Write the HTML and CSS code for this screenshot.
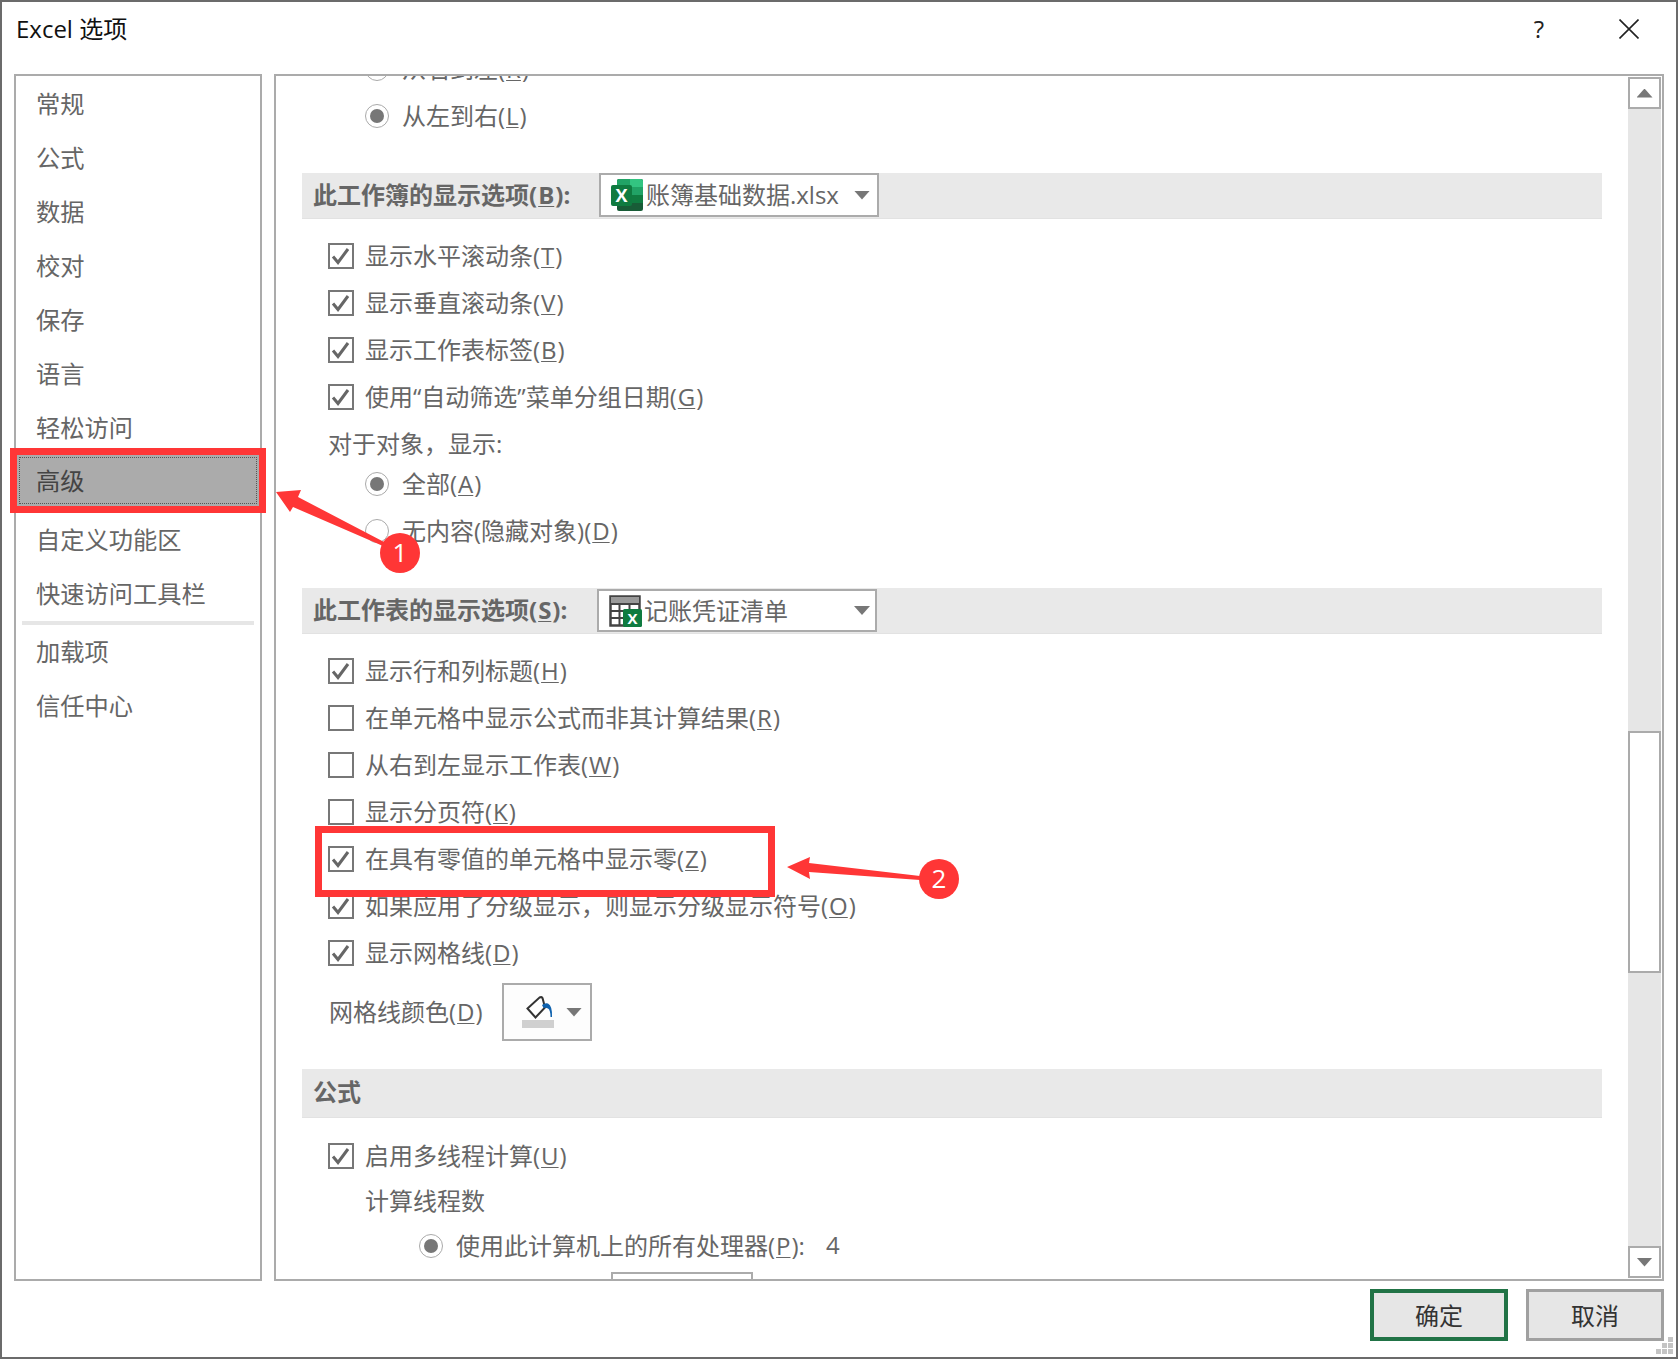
FILE: index.html
```html
<!DOCTYPE html>
<html lang="zh-CN">
<head>
<meta charset="utf-8">
<title>Excel 选项</title>
<link rel="stylesheet" href="styles.css">
</head>
<body>
<div class="dialog">
  <header class="titlebar">
    <span class="title">Excel 选项</span>
    <span class="help">?</span>
    <svg class="close" width="20" height="20" viewBox="0 0 20 20"><path d="M0.5 0.5L19.5 19.5M19.5 0.5L0.5 19.5" fill="none" stroke="#222" stroke-width="1.6"/></svg>
  </header>
  <div class="panels">
    <nav class="nav">
      <div class="nav-item">常规</div>
      <div class="nav-item">公式</div>
      <div class="nav-item">数据</div>
      <div class="nav-item">校对</div>
      <div class="nav-item">保存</div>
      <div class="nav-item">语言</div>
      <div class="nav-item">轻松访问</div>
      <div class="nav-item nav-item--active">高级</div>
      <div class="nav-item">自定义功能区</div>
      <div class="nav-item">快速访问工具栏</div>
      <div class="nav-sep"></div>
      <div class="nav-item">加载项</div>
      <div class="nav-item">信任中心</div>
    </nav>
    <main class="main">
      <div class="content">
        <div class="row row--radio"><span class="radio"></span><span>从右到左(<u>R</u>)</span></div>
        <div class="row row--radio"><span class="radio radio--on"></span><span>从左到右(<u>L</u>)</span></div>

        <section class="section section--first">
          <b class="section-label section-label--book">此工作簿的显示选项(<u>B</u>):</b>
          <div class="combo combo--book">
            <svg class="combo-icon" width="32" height="32" viewBox="0 0 32 32">
              <rect x="6" width="26" height="32" rx="2" fill="#185c37"/>
              <path d="M19 0H30a2 2 0 0 1 2 2V8H19z" fill="#33c481"/>
              <path d="M8 0H19V8H6V2a2 2 0 0 1 2-2z" fill="#21a366"/>
              <rect x="6" y="8" width="13" height="8" fill="#107c41"/>
              <rect x="19" y="8" width="13" height="8" fill="#21a366"/>
              <rect x="19" y="16" width="13" height="8" fill="#107c41"/>
              <rect y="6" width="21" height="21" rx="2" fill="#0f7b40"/>
              <text class="x-mark x-mark--large" x="10.5" y="23" text-anchor="middle">X</text>
            </svg>
            <span class="combo-text">账簿基础数据.xlsx</span>
            <i class="tri tri--down combo-tri"></i>
          </div>
        </section>
        <div class="row row--check"><span class="check"><svg width="22" height="22" viewBox="0 0 22 22"><path class="tick" d="M3 11.5L8 17.5L18 4"/></svg></span><span>显示水平滚动条(<u>T</u>)</span></div>
        <div class="row row--check"><span class="check"><svg width="22" height="22" viewBox="0 0 22 22"><path class="tick" d="M3 11.5L8 17.5L18 4"/></svg></span><span>显示垂直滚动条(<u>V</u>)</span></div>
        <div class="row row--check"><span class="check"><svg width="22" height="22" viewBox="0 0 22 22"><path class="tick" d="M3 11.5L8 17.5L18 4"/></svg></span><span>显示工作表标签(<u>B</u>)</span></div>
        <div class="row row--check"><span class="check"><svg width="22" height="22" viewBox="0 0 22 22"><path class="tick" d="M3 11.5L8 17.5L18 4"/></svg></span><span>使用“自动筛选”菜单分组日期(<u>G</u>)</span></div>
        <div class="text-row text-row--objects">对于对象，显示:</div>
        <div class="row row--radio"><span class="radio radio--on"></span><span>全部(<u>A</u>)</span></div>
        <div class="row row--radio"><span class="radio"></span><span>无内容(隐藏对象)(<u>D</u>)</span></div>

        <section class="section">
          <b class="section-label section-label--sheet">此工作表的显示选项(<u>S</u>):</b>
          <div class="combo combo--sheet">
            <svg class="combo-icon" width="34" height="32" viewBox="0 0 34 32">
              <rect x="1.5" y="1.5" width="29" height="29" fill="#fff" stroke="#444" stroke-width="2.5"/>
              <rect x="2" y="2" width="28" height="7" fill="#9a9a9a"/>
              <path d="M1 9H31M1 16H31M1 23H16M10.5 9V31M20.5 9V16" fill="none" stroke="#444" stroke-width="2"/>
              <rect x="14" y="14" width="19" height="18" rx="1.5" fill="#0f7b40"/>
              <text class="x-mark" x="23.5" y="28.5" text-anchor="middle">X</text>
            </svg>
            <span class="combo-text">记账凭证清单</span>
            <i class="tri tri--down combo-tri"></i>
          </div>
        </section>
        <div class="row row--check"><span class="check"><svg width="22" height="22" viewBox="0 0 22 22"><path class="tick" d="M3 11.5L8 17.5L18 4"/></svg></span><span>显示行和列标题(<u>H</u>)</span></div>
        <div class="row row--check"><span class="check"></span><span>在单元格中显示公式而非其计算结果(<u>R</u>)</span></div>
        <div class="row row--check"><span class="check"></span><span>从右到左显示工作表(<u>W</u>)</span></div>
        <div class="row row--check"><span class="check"></span><span>显示分页符(<u>K</u>)</span></div>
        <div class="row row--check"><span class="check"><svg width="22" height="22" viewBox="0 0 22 22"><path class="tick" d="M3 11.5L8 17.5L18 4"/></svg></span><span>在具有零值的单元格中显示零(<u>Z</u>)</span></div>
        <div class="row row--check"><span class="check"><svg width="22" height="22" viewBox="0 0 22 22"><path class="tick" d="M3 11.5L8 17.5L18 4"/></svg></span><span>如果应用了分级显示，则显示分级显示符号(<u>O</u>)</span></div>
        <div class="row row--check"><span class="check"><svg width="22" height="22" viewBox="0 0 22 22"><path class="tick" d="M3 11.5L8 17.5L18 4"/></svg></span><span>显示网格线(<u>D</u>)</span></div>
        <div class="grid-color">
          <span class="grid-color-label">网格线颜色(<u>D</u>)</span>
          <div class="color-btn">
            <span class="color-swatch">
              <svg class="bucket" width="28" height="24" viewBox="0 0 28 24">
                <path d="M1.5 12.5L13.5 1.5Q15.5 0.5 16.5 2L19 11.5L9.5 21.5Z" fill="#fff" stroke="#333" stroke-width="2"/>
                <path d="M16 9Q19 6.5 22 7.5Q26.5 10 26 21H24.5Q24.5 14 22 12.5Q20 11.5 17.5 12Z" fill="#0f62ae"/>
              </svg>
              <i class="swatch-bar"></i>
            </span>
            <i class="tri tri--down"></i>
          </div>
        </div>

        <section class="section section--tall">
          <b class="section-label">公式</b>
        </section>
        <div class="row row--check"><span class="check"><svg width="22" height="22" viewBox="0 0 22 22"><path class="tick" d="M3 11.5L8 17.5L18 4"/></svg></span><span>启用多线程计算(<u>U</u>)</span></div>
        <div class="text-row text-row--threads">计算线程数</div>
        <div class="row row--radio row--deep"><span class="radio radio--on"></span><span>使用此计算机上的所有处理器(<u>P</u>):</span><span class="cpu-count">4</span></div>
        <div class="spin"></div>
      </div>
      <aside class="scrollbar">
        <div class="sb-btn"><i class="tri tri--up"></i></div>
        <div class="sb-track"><div class="sb-thumb"></div></div>
        <div class="sb-btn"><i class="tri tri--down"></i></div>
      </aside>
    </main>
  </div>
  <footer class="footer">
    <button class="btn btn--primary">确定</button>
    <button class="btn">取消</button>
  </footer>
</div>
<svg class="grip" width="17" height="17" viewBox="0 0 17 17">
  <path d="M12 0h5v5h-5zM6 6h5v5h-5zM12 6h5v5h-5zM0 12h5v5h-5zM6 12h5v5h-5zM12 12h5v5h-5z" fill="#c4c4c4"/>
</svg>
<svg class="marks" width="1678" height="1359" viewBox="0 0 1678 1359">
  <rect class="mark-box" x="13.5" y="451.5" width="249" height="58"/>
  <rect class="mark-box" x="318.5" y="829.5" width="453" height="64"/>
  <polygon class="mark-fill" points="276,492 301,490 298,497 386,543 383,546 293,507 290,512"/>
  <circle class="mark-fill" cx="400" cy="553" r="20"/>
  <text class="mark-num" x="400" y="562" text-anchor="middle">1</text>
  <polygon class="mark-fill" points="787,867 810,857 809,863 920,876 920,880 809,872 810,879"/>
  <circle class="mark-fill" cx="939" cy="879" r="20"/>
  <text class="mark-num" x="939" y="888" text-anchor="middle">2</text>
</svg>
</body>
</html>
```

FILE: styles.css
```css
html, body {
  margin: 0;
  padding: 0;
  height: 1359px;
  overflow: hidden;
  background: #fff;
}
body {
  position: relative;
  font-family: "Open Sans", "Noto Sans CJK SC", sans-serif;
  font-size: 24px;
  color: #666;
}
u {
  margin: 0 1px;
  text-underline-offset: 2px;
  text-decoration-thickness: 1px;
}
.dialog {
  box-sizing: border-box;
  height: 1359px;
  border: 2px solid #6b6b6b;
  background: #fff;
  display: flex;
  flex-direction: column;
}
.titlebar {
  height: 72px;
  flex: none;
  display: flex;
  align-items: flex-start;
  padding-left: 14px;
  box-sizing: border-box;
}
.title {
  color: #111;
  line-height: 54px;
  flex: 1;
}
.help {
  color: #222;
  line-height: 54px;
  margin-right: 75px;
}
.close {
  margin-top: 17px;
  margin-right: 37px;
}
.panels {
  height: 1207px;
  flex: none;
  display: flex;
  gap: 12px;
  padding: 0 12px;
}
.nav {
  box-sizing: border-box;
  width: 248px;
  flex: none;
  border: 2px solid #ababab;
  padding-top: 1px;
}
.nav-item {
  height: 54px;
  line-height: 53px;
  padding-left: 20px;
  font-size: 24.25px;
}
.nav-item--active {
  height: 51px;
  line-height: 51px;
  margin: 0 1px 7px;
  padding-left: 19px;
  background: #ababab;
  color: #444;
  outline: 1px dotted #555;
  outline-offset: -3px;
}
.nav-sep {
  height: 4px;
  margin: 0 6px;
  background: #e6e6e6;
}
.main {
  flex: 1;
  min-width: 0;
  box-sizing: border-box;
  border: 2px solid #ababab;
  display: flex;
}
.content {
  flex: 1;
  min-width: 0;
  overflow: hidden;
  padding: 0 25px 0 26px;
}
.content > :first-child { margin-top: -31px; }
.row {
  height: 47px;
  display: flex;
  align-items: center;
  white-space: nowrap;
}
.row > :not(.check, .radio) { margin-bottom: 3px; }
.row--check { padding-left: 26px; gap: 11px; }
.row--radio { padding-left: 63px; gap: 13px; }
.row--deep { padding-left: 117px; }
.check {
  box-sizing: border-box;
  width: 26px;
  height: 26px;
  flex: none;
  border: 2px solid #777;
  background: #fff;
  display: flex;
  align-items: center;
  justify-content: center;
}
.tick {
  fill: none;
  stroke: #666;
  stroke-width: 3;
}
.radio {
  box-sizing: border-box;
  width: 24px;
  height: 24px;
  flex: none;
  border: 1.5px solid #aaa;
  border-radius: 50%;
  background: #fff;
  display: flex;
  align-items: center;
  justify-content: center;
}
.radio--on::after {
  content: "";
  width: 14px;
  height: 14px;
  border-radius: 50%;
  background: #777;
}
.text-row {
  white-space: nowrap;
  line-height: 47px;
}
.text-row--objects { height: 40px; padding-left: 26px; }
.text-row--threads { height: 43px; padding-left: 63px; line-height: 43px; }
.cpu-count { margin-left: 8px; }
.section {
  box-sizing: border-box;
  height: 46px;
  margin: 34px 0 13px;
  background: #e9e9e9;
  border-bottom: 1px solid #e2e2e2;
  display: flex;
  padding-left: 11px;
}
.section--tall {
  height: 49px;
  margin: 28px 0 14px;
}
.section-label {
  font-weight: 700;
  line-height: 44px;
  white-space: nowrap;
}
.section--tall .section-label { line-height: 45px; }
.section-label--book { width: 286px; }
.section-label--sheet { width: 284px; }
.combo {
  box-sizing: border-box;
  width: 280px;
  background: #fff;
  border: 2px solid #ababab;
  display: flex;
  align-items: center;
  padding: 0 7px 0 10px;
  white-space: nowrap;
}
.combo-text { margin-bottom: 3px; }
.combo--book { height: 44px; gap: 3px; }
.combo--sheet { height: 43px; margin-top: 1px; gap: 1px; padding-right: 5px; }
.combo-tri { margin-left: auto; }
.x-mark {
  font-family: "Open Sans", sans-serif;
  font-size: 15px;
  font-weight: 700;
  fill: #fff;
}
.x-mark--large { font-size: 18px; }
.tri {
  display: block;
  width: 16px;
  height: 9px;
  background: #777;
  flex: none;
}
.tri--down { clip-path: polygon(0 0, 100% 0, 50% 100%); }
.tri--up { clip-path: polygon(50% 0, 100% 100%, 0 100%); }
.grid-color {
  display: flex;
  margin-top: 7px;
  height: 58px;
  align-items: center;
  padding-left: 27px;
}
.grid-color-label {
  width: 173px;
  white-space: nowrap;
  margin-bottom: 4px;
}
.color-btn {
  box-sizing: border-box;
  width: 90px;
  height: 58px;
  border: 2px solid #ababab;
  background: #fdfdfd;
  display: flex;
  align-items: center;
  padding-left: 18px;
  gap: 12px;
}
.color-swatch {
  display: flex;
  flex-direction: column;
  align-items: center;
  width: 32px;
}
.bucket { margin-left: 4px; }
.swatch-bar {
  display: block;
  width: 32px;
  height: 8px;
  background: #d0d0d0;
}
.spin {
  box-sizing: border-box;
  width: 142px;
  height: 40px;
  margin: 3px 0 0 309px;
  border: 2px solid #ababab;
}
.scrollbar {
  width: 33px;
  flex: none;
  margin: 1px;
  display: flex;
  flex-direction: column;
  background: #e6e6e6;
}
.sb-btn {
  box-sizing: border-box;
  height: 32px;
  flex: none;
  border: 2px solid #ababab;
  background: #fff;
  display: flex;
  align-items: center;
  justify-content: center;
}
.sb-track { flex: 1; padding-top: 622px; }
.sb-thumb {
  box-sizing: border-box;
  height: 242px;
  border: 2px solid #ababab;
  background: #fff;
}
.footer {
  flex: 1;
  display: flex;
  justify-content: flex-end;
  gap: 18px;
  padding: 8px 12px 0 0;
  box-sizing: border-box;
  align-items: flex-start;
}
.btn {
  box-sizing: border-box;
  width: 138px;
  height: 52px;
  background: #e6e6e6;
  border: 3px solid #a0a0a0;
  color: #333;
  font: inherit;
  padding: 0 0 2px;
}
.btn--primary { border: 4px solid #217346; }
.grip {
  position: absolute;
  left: 1656px;
  top: 1337px;
}
.marks {
  position: absolute;
  left: 0;
  top: 0;
  pointer-events: none;
}
.mark-box {
  fill: none;
  stroke: #ff3636;
  stroke-width: 7;
}
.mark-fill { fill: #ff3636; }
.mark-num {
  font-family: "Open Sans", sans-serif;
  font-size: 26px;
  fill: #fff;
}
```
